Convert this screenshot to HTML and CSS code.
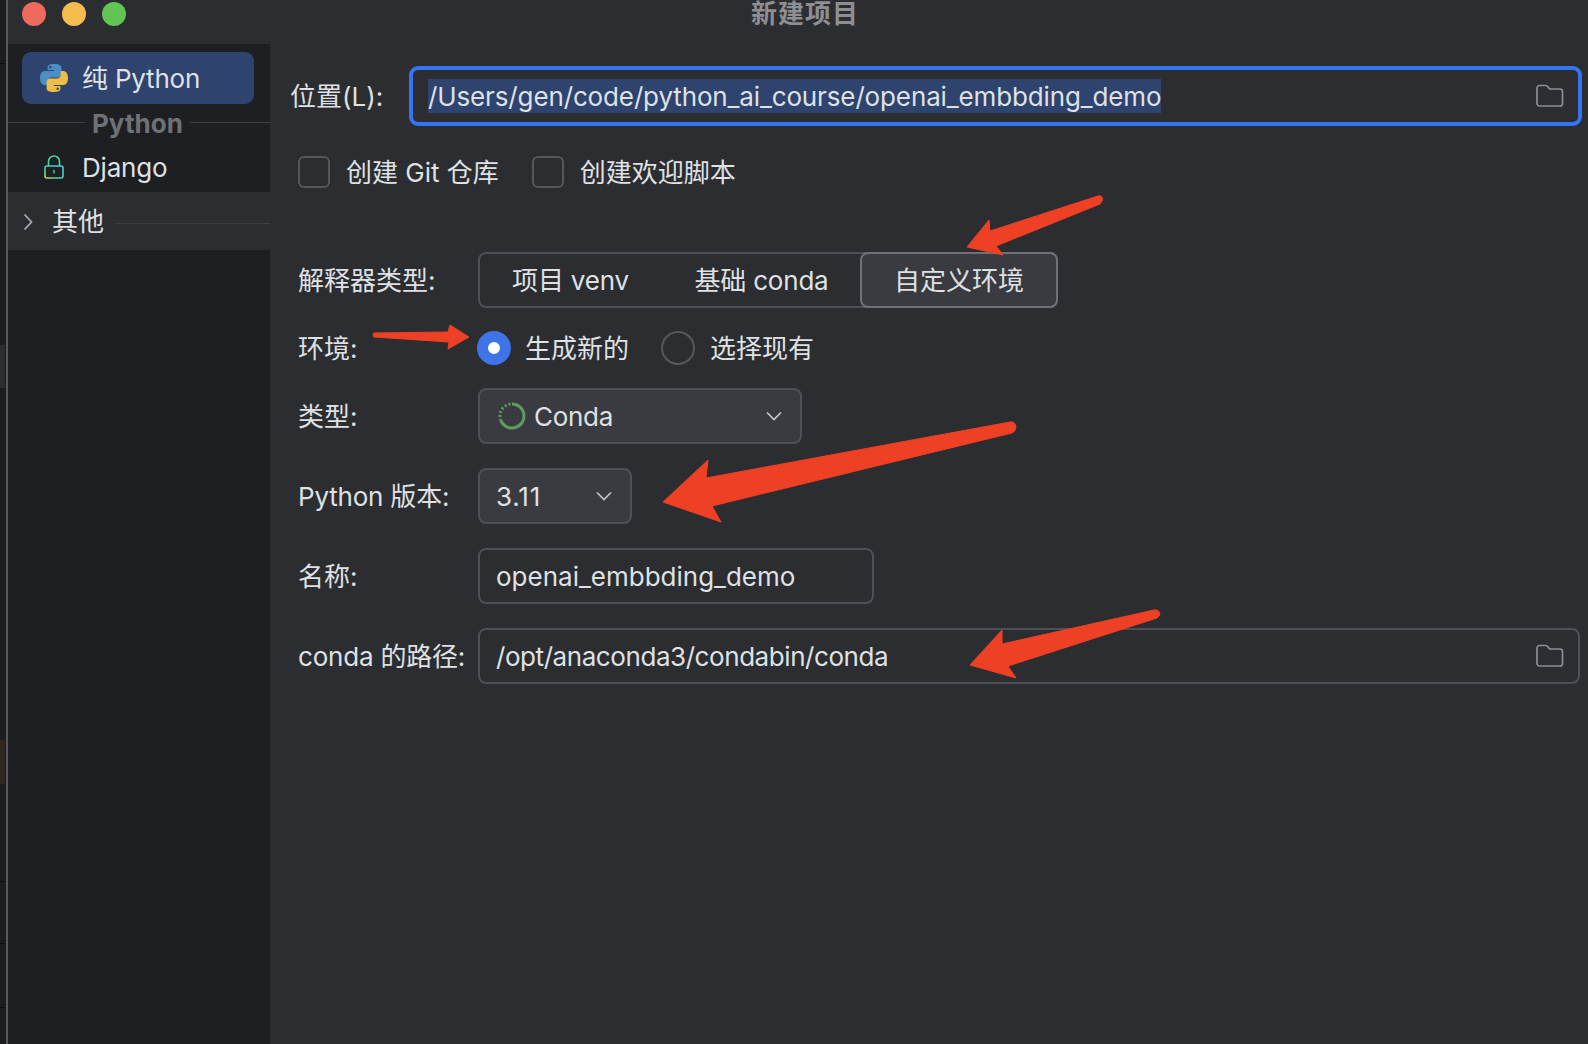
FILE: index.html
```html
<!DOCTYPE html>
<html>
<head>
    <title>新建项目</title>
    <link rel="stylesheet" href="styles.css">
</head>
<body>
    <div class="desktop-strip">
        <div class="strip-line"></div>
        <div class="strip-gray"></div>
        <div class="strip-brown"></div>
        <div class="strip-line line-a"></div>
        <div class="strip-line line-b"></div>
        <div class="strip-line line-c"></div>
    </div>
    <div class="window">
        <div class="titlebar">
            <div class="lights">
                <span class="light red"></span>
                <span class="light yellow"></span>
                <span class="light green"></span>
            </div>
            <div class="title">新建项目</div>
        </div>
        <div class="content">
            <div class="sidebar">
                <div class="side-item selected">
                    <svg class="python-icon" viewBox="0 0 28 28">
                        <path fill="#4b8fc4" d="M13.8 0C7.2 0 7.6 2.9 7.6 2.9v3h6.4v1H5C2 6.9 0 9.300 0 13.900s2.300 7 4.800 7h2.500v-3.300c0-2.500 2-4.200 4.400-4.200h6c2.300 0 3.700-1.700 3.700-3.700V3.700C21.400 1.600 19.400 0 13.800 0zM10.300 2.100a1.200 1.200 0 1 1 0 2.400 1.200 1.200 0 0 1 0-2.400z"/>
                        <path fill="#eebd45" d="M14.200 28c6.600 0 6.200-2.900 6.200-2.900v-3H14v-1h9c3 0 5-2.400 5-7s-2.300-7-4.800-7h-2.500v3.300c0 2.500-2 4.200-4.400 4.200h-6c-2.300 0-3.700 1.700-3.700 3.700v5.900C6.600 26.400 8.600 28 14.200 28zm3.500-2.100a1.200 1.200 0 1 1 0-2.400 1.200 1.200 0 0 1 0 2.400z"/>
                    </svg>
                    <span class="txt tight">纯 Python</span>
                </div>
                <div class="side-header"><span class="txt">Python</span></div>
                <div class="side-item">
                    <svg class="lock-icon" viewBox="0 0 20 24">
                        <defs>
                            <linearGradient id="lockGrad" x1="0" y1="1" x2="1" y2="0">
                                <stop offset="0" stop-color="#c8d84a"/>
                                <stop offset="0.3" stop-color="#45d6a8"/>
                                <stop offset="1" stop-color="#4fc9e0"/>
                            </linearGradient>
                        </defs>
                        <rect x="1" y="11" width="18" height="12" rx="2" fill="none" stroke="url(#lockGrad)" stroke-width="1.600"/>
                        <path d="M4.500 11V6.500a5.500 5.500 0 0 1 11 0V11" fill="none" stroke="#45d6a8" stroke-width="1.600"/>
                        <path d="M10 15v3.500" stroke="#45d6a8" stroke-width="1.400"/>
                    </svg>
                    <span class="txt tight">Django</span>
                </div>
                <div class="side-group">
                    <svg class="chevron-right" viewBox="0 0 10 18"><path d="M1.500 1.500 8.500 9l-7 7.500" fill="none" stroke="#a8abb0" stroke-width="1.800"/></svg>
                    <span class="txt">其他</span>
                    <div class="group-line"></div>
                </div>
            </div>
            <div class="main">
                <div class="location-row">
                    <label class="txt location-label">位置(L):</label>
                    <div class="field focus">
                        <span class="txt selected-text">/Users/gen/code/python_ai_course/openai_embbding_demo</span>
                        <svg class="folder-icon" viewBox="0 0 28 24"><path d="M1 4a2.500 2.500 0 0 1 2.500-2.500h6.300c1 0 1.500.4 2.100 1.200l1.300 1.800c.3.400.6.500 1.100.5h9.700A2.500 2.500 0 0 1 26.500 7.500v12a2.500 2.500 0 0 1-2.500 2.500H3.500A2.500 2.500 0 0 1 1 19.500z" fill="none" stroke="#8d8f94" stroke-width="1.700"/></svg>
                    </div>
                </div>
                <div class="check-row">
                    <span class="checkbox"></span><span class="txt check-label">创建 Git 仓库</span>
                    <span class="checkbox"></span><span class="txt">创建欢迎脚本</span>
                </div>
                <div class="form">
                    <div class="row row-interp">
                        <label class="txt">解释器类型:</label>
                        <div class="segments">
                            <div class="segment seg-venv tight"><span class="txt">项目 venv</span></div>
                            <div class="segment seg-conda tight"><span class="txt">基础 conda</span></div>
                            <div class="segment active"><span class="txt">自定义环境</span></div>
                        </div>
                    </div>
                    <div class="row row-env">
                        <label class="txt">环境:</label>
                        <span class="radio on"></span><span class="txt radio-label">生成新的</span>
                        <span class="radio"></span><span class="txt">选择现有</span>
                    </div>
                    <div class="row row-type">
                        <label class="txt">类型:</label>
                        <div class="field select type-select">
                            <svg class="conda-icon" viewBox="0 0 28 28">
                                <path d="M14 2a12 12 0 1 1-11 16.800" fill="none" stroke="#5f9a5f" stroke-width="3"/>
                                <path d="M3 18.800A12 12 0 0 1 14 2" fill="none" stroke="#5f9a5f" stroke-width="3" stroke-dasharray="2 2"/>
                            </svg>
                            <span class="txt grow conda-name">Conda</span>
                            <svg class="chevron-down" viewBox="0 0 16 10"><path d="M1 1.500 8 8.500l7-7" fill="none" stroke="#c4c6ca" stroke-width="1.700"/></svg>
                        </div>
                    </div>
                    <div class="row row-python">
                        <label class="txt tight">Python 版本:</label>
                        <div class="field select version-select">
                            <span class="txt grow version-text">3.11</span>
                            <svg class="chevron-down" viewBox="0 0 16 10"><path d="M1 1.500 8 8.500l7-7" fill="none" stroke="#c4c6ca" stroke-width="1.700"/></svg>
                        </div>
                    </div>
                    <div class="row row-name">
                        <label class="txt">名称:</label>
                        <div class="field name-field"><span class="txt">openai_embbding_demo</span></div>
                    </div>
                    <div class="row row-conda">
                        <label class="txt tight">conda 的路径:</label>
                        <div class="field path-field">
                            <span class="txt grow path-text">/opt/anaconda3/condabin/conda</span>
                            <svg class="folder-icon" viewBox="0 0 28 24"><path d="M1 4a2.500 2.500 0 0 1 2.500-2.500h6.300c1 0 1.500.4 2.100 1.200l1.300 1.800c.3.400.6.500 1.100.5h9.700A2.500 2.500 0 0 1 26.500 7.500v12a2.500 2.500 0 0 1-2.500 2.500H3.500A2.500 2.500 0 0 1 1 19.500z" fill="none" stroke="#8d8f94" stroke-width="1.700"/></svg>
                        </div>
                    </div>
                </div>
            </div>
        </div>
    </div>

    <!-- red annotation arrows drawn over the dialog -->
    <svg class="arrows" viewBox="0 0 1588 1044">
        <g fill="#ee4024" stroke="#ee4024" stroke-width="1" stroke-linejoin="round">
            <path d="M1098 196 990 231 989 220 967 247 1003 255 996 246 1100 204Q1104 200 1102 197 1100 195 1098 196z"/>
            <path d="M374 333 448 332 450 325 469 337 448 349 449 342 374 337Q372 335 374 333z"/>
            <path d="M1010 422 706 478 708 460 663 502 721 522 712 506 1012 433Q1016 431 1016 427 1015 421 1010 422z"/>
            <path d="M1154 610 1002 644 1002 630 970 665 1016 678 1008 666 1157 618Q1160 616 1160 613 1158 609 1154 610z"/>
        </g>
    </svg>
</body>
</html>
```

FILE: styles.css
```css
body {
    margin: 0;
    width: 1588px;
    height: 1044px;
    overflow: hidden;
    display: flex;
    position: relative;
    background-color: #1e1f22;
    color: #dfe1e5;
    font-family: Inter, "Noto Sans CJK SC", sans-serif;
    font-size: 26px;
    line-height: 32px;
}
.txt {
    padding-top: 2px;
}
.tight {
    letter-spacing: -0.2px;
}

/* sliver of the window behind the dialog */
.desktop-strip {
    width: 5px;
    flex-shrink: 0;
    background-color: #1d1e20;
}
.strip-line {
    height: 1px;
    margin-top: 63px;
    background-color: #0e0e10;
}
.strip-gray {
    height: 43px;
    margin-top: 281px;
    background-color: #2c2e32;
}
.strip-brown {
    height: 44px;
    margin-top: 352px;
    background-color: #2e2820;
}
.line-a { margin-top: 97px; }
.line-b { margin-top: 61px; }
.line-c { margin-top: 63px; }

.window {
    flex: 1;
    display: flex;
    flex-direction: column;
    min-width: 0;
    margin-left: 1px;
    border-left: 2px solid #58595c;
    background-color: #2b2d30;
}

.titlebar {
    height: 44px;
    flex-shrink: 0;
    position: relative;
    display: flex;
    justify-content: center;
}
.lights {
    position: absolute;
    left: 14px;
    top: 2px;
    display: flex;
    gap: 16px;
}
.light {
    width: 24px;
    height: 24px;
    border-radius: 50%;
}
.red { background-color: #ee6a5f; }
.yellow { background-color: #f5bd4f; }
.green { background-color: #61c454; }
.title {
    margin-top: -2px;
    margin-left: 14px;
    color: #8d8f93;
    font-weight: 600;
    letter-spacing: 1px;
}

.content {
    flex: 1;
    display: flex;
    min-height: 0;
}

.sidebar {
    width: 262px;
    flex-shrink: 0;
    background-color: #1e1f22;
    padding-top: 8px;
}
.side-item {
    height: 52px;
    display: flex;
    align-items: center;
    margin: 0 16px 0 14px;
    border-radius: 9px;
}
.side-item.selected {
    background-color: #2e436e;
}
.python-icon {
    width: 28px;
    height: 28px;
    margin-left: 18px;
    margin-right: 14px;
}
.lock-icon {
    width: 20px;
    height: 24px;
    margin-left: 22px;
    margin-right: 18px;
}
.side-header {
    height: 37px;
    display: flex;
    align-items: center;
    gap: 7px;
    color: #6f7175;
    font-weight: 700;
}
.side-header::before {
    content: "";
    width: 77px;
    height: 1px;
    background-color: #3f4145;
}
.side-header::after {
    content: "";
    flex: 1;
    height: 1px;
    background-color: #3f4145;
}
.side-item + .side-header + .side-item {
    height: 51px;
}
.side-group {
    height: 58px;
    display: flex;
    align-items: center;
    background-color: #2b2d30;
}
.chevron-right {
    width: 10px;
    height: 18px;
    margin-left: 15px;
    margin-right: 19px;
    margin-top: 2px;
}
.group-line {
    flex: 1;
    height: 1px;
    margin-left: 11px;
    margin-top: 5px;
    background-color: #3b3d41;
}

.main {
    flex: 1;
    min-width: 0;
    padding-top: 22px;
}
.location-row {
    display: flex;
    align-items: center;
    padding-left: 20px;
    padding-right: 6px;
}
.location-label {
    width: 119px;
    flex-shrink: 0;
}
.field {
    height: 56px;
    box-sizing: border-box;
    display: flex;
    align-items: center;
    padding: 0 14px 0 16px;
    border: 2px solid #4e5055;
    border-radius: 8px;
}
.field.focus {
    flex: 1;
    height: 60px;
    padding-left: 15px;
    padding-right: 14px;
    border: 4px solid #3574f0;
    border-radius: 9px;
}
.selected-text {
    flex: 0 0 auto;
    margin-right: auto;
    background-color: #2e436e;
    letter-spacing: -0.13px;
}
.folder-icon {
    width: 28px;
    height: 24px;
}
.check-row {
    display: flex;
    align-items: center;
    margin-top: 30px;
    padding-left: 28px;
    height: 32px;
}
.checkbox {
    width: 32px;
    height: 32px;
    box-sizing: border-box;
    border: 2px solid #56585c;
    border-radius: 6px;
    margin-right: 16px;
}
.check-label {
    margin-right: 33px;
}

.form {
    margin-top: 64px;
    padding-left: 28px;
    padding-right: 8px;
}
.row {
    display: flex;
    align-items: center;
}
.row label {
    width: 180px;
    flex-shrink: 0;
}
.segments {
    width: 580px;
    height: 56px;
    box-sizing: border-box;
    display: flex;
    border: 2px solid #4e5055;
    border-radius: 8px;
}
.segment {
    display: flex;
    align-items: center;
    justify-content: center;
}
.seg-venv { width: 181px; }
.seg-conda { width: 201px; }
.segment.active {
    flex: 1;
    margin: -2px;
    border: 2px solid #6f7176;
    border-radius: 8px;
    background-color: #393b40;
}
.row-env {
    margin-top: 23px;
}
.radio {
    width: 34px;
    height: 34px;
    box-sizing: border-box;
    margin-left: -1px;
    margin-right: 15px;
    border: 2px solid #56585c;
    border-radius: 50%;
}
.radio.on {
    margin-right: 14px;
    border: 11px solid #3f73e8;
    background-color: #fff;
}
.radio-label {
    margin-right: 33px;
}
.row-type {
    margin-top: 23px;
}
.row-python, .row-name, .row-conda {
    margin-top: 24px;
}
.select {
    background-color: #393b40;
    padding-right: 18px;
}
.type-select {
    width: 324px;
    padding-left: 18px;
}
.version-select {
    width: 154px;
}
.name-field {
    width: 396px;
}
.path-field {
    flex: 1;
}
.grow {
    flex: 1;
}
.conda-name {
    letter-spacing: -0.3px;
}
.version-text {
    letter-spacing: 0.8px;
}
.path-text {
    letter-spacing: -0.43px;
}
.conda-icon {
    width: 28px;
    height: 28px;
    margin-right: 8px;
}
.chevron-down {
    width: 16px;
    height: 10px;
}

.arrows {
    position: absolute;
    left: 0;
    top: 0;
    width: 1588px;
    height: 1044px;
    pointer-events: none;
}
```
